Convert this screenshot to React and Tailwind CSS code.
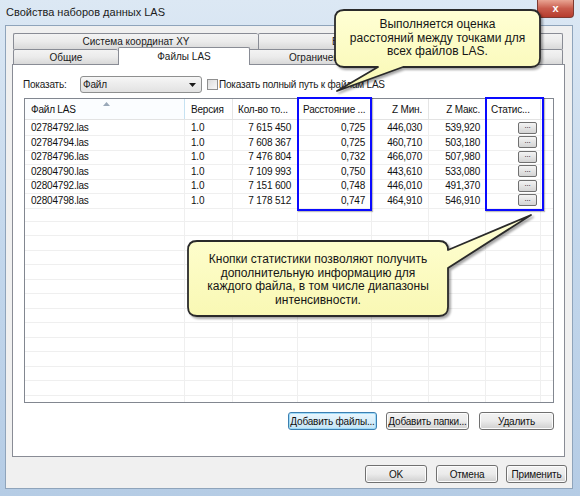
import React from "react";

const rows = [
    ["02784792.las", "1.0", "7 615 450", "0,725", "446,030", "539,920"],
    ["02784794.las", "1.0", "7 608 367", "0,725", "460,710", "503,180"],
    ["02784796.las", "1.0", "7 476 804", "0,732", "466,070", "507,980"],
    ["02804790.las", "1.0", "7 109 993", "0,750", "443,610", "533,080"],
    ["02804792.las", "1.0", "7 151 600", "0,748", "446,010", "491,370"],
    ["02804798.las", "1.0", "7 178 512", "0,747", "464,910", "546,910"],
];

const cols = "grid grid-cols-[160px_48px_65px_74px_57px_57px_55px_1fr]";

function Tab({ label, w, last }) {
    return (
        <div
            className={`h-full flex items-center justify-center border-t border-l border-[#898c95] bg-gradient-to-b from-[#f3f3f3] via-[#ebebeb] to-[#d9d9d9] text-[10px] text-[#1a1a1a] whitespace-nowrap overflow-hidden rounded-t-[2px] ${
                last ? "border-r" : ""
            }`}
            style={{ width: w }}
        >
            {label}
        </div>
    );
}

function Btn({ children, w, focus }) {
    return (
        <div
            className={`h-[18px] flex items-center justify-center rounded-[3px] border text-[10px] tracking-[-0.2px] whitespace-nowrap text-[#111] ${
                focus
                    ? "border-[#3c7fb1] bg-gradient-to-b from-[#eaf6fd] to-[#c4e5f6] shadow-[inset_0_0_0_1px_#9edaf8]"
                    : "border-[#707070] bg-gradient-to-b from-[#f2f2f2] via-[#ebebeb] to-[#cfcfcf] shadow-[inset_0_0_0_1px_#fcfcfc]"
            }`}
            style={{ width: w }}
        >
            {children}
        </div>
    );
}

export default function App() {
    const empty = Array.from({ length: 14 });

    return (
        <div className="relative w-[580px] h-[496px] overflow-hidden bg-gradient-to-b from-[#dce8f4] via-[#c3d7ec] to-[#b5cce5] font-['Liberation_Sans',Arial,sans-serif] text-black">
            {/* Title bar */}
            <div className="h-[25px] flex items-center pl-[6px] text-[11px] text-[#1b1b1b]">
                Свойства наборов данных LAS
            </div>
            <div className="absolute top-0 right-[6px] w-[37px] h-[18px] rounded-b-[4px] border border-t-0 border-[#7e3a32] bg-gradient-to-b from-[#e8a493] via-[#c85b4c] to-[#b63c2d] flex items-center justify-center text-white text-[11px] font-bold">
                x
            </div>

            {/* Client area */}
            <div className="ml-[5px] w-[568px] h-[464px] bg-[#f0f0f0] border border-[#8fa4bb] pt-[7px] pl-[6px] pr-[7px]">
                {/* Tabs row 1 */}
                <div className="flex h-[16px] ml-[1px]">
                    <Tab label="Система координат XY" w={245} />
                    <Tab label="Вертикальная система координат" w={305} last />
                </div>
                {/* Tabs row 2 */}
                <div className="relative z-10 flex h-[15px] ml-[1px]">
                    <Tab label="Общие" w={105} />
                    <div className="self-start -mt-[2px] h-[18px] w-[132px] flex items-center justify-center border-t border-l border-r border-[#898c95] bg-white text-[10px] text-[#1a1a1a] rounded-t-[2px]">
                        Файлы LAS
                    </div>
                    <div className="h-full flex items-center justify-center border-t border-[#898c95] bg-gradient-to-b from-[#f3f3f3] via-[#ebebeb] to-[#d9d9d9] text-[10px] text-[#1a1a1a] w-[200px] whitespace-nowrap">
                        Ограничения поверхности
                    </div>
                    <Tab label="Статистика" w={113} last />
                </div>

                {/* Panel */}
                <div className="h-[393px] w-[553px] bg-white border border-[#898c95] pt-[11px] pl-[10px]">
                    <div className="flex items-center h-[17px] text-[10px] tracking-[-0.2px] text-[#1a1a1a]">
                        <div className="w-[57px]">Показать:</div>
                        <div className="relative w-[122px] h-[17px] rounded-[3px] border border-[#8e8f8f] bg-gradient-to-b from-[#f6f6f6] to-[#e2e2e2] flex items-center pl-[2px]">
                            Файл
                            <svg className="absolute right-[5px] top-[6px]" width="7" height="4" viewBox="0 0 7 4">
                                <path d="M0 0 H7 L3.5 4 Z" fill="#1a1a1a" />
                            </svg>
                        </div>
                        <div className="ml-[5px] w-[11px] h-[11px] border border-[#8f8f8f] bg-gradient-to-br from-[#dcdcdc] to-[#f8f8f8]"></div>
                        <div className="ml-[1px] whitespace-nowrap">Показать полный путь к файлам LAS</div>
                    </div>

                    {/* Table */}
                    <div className="mt-[5px] ml-[1px] w-[530px] h-[305px] border border-[#828790] overflow-hidden text-[10px] tracking-[-0.2px] text-[#111]">
                        <div className={`${cols} h-[21px] border-b border-[#e3e3e3]`}>
                            <div className="relative flex items-center pl-[6px] border-r border-[#c6e2f2] bg-[#fbfdff]">
                                Файл LAS
                                <svg className="absolute left-[78px] top-[3px]" width="7" height="4" viewBox="0 0 7 4">
                                    <path d="M3.5 0 L7 4 H0 Z" fill="#9aa8b8" />
                                </svg>
                            </div>
                            <div className="flex items-center pl-[6px] border-r border-[#e5e5e5]">Версия</div>
                            <div className="flex items-center pl-[5px] border-r border-[#e5e5e5] whitespace-nowrap">Кол-во то...</div>
                            <div className="flex items-center pl-[5px] border-r border-[#e5e5e5] whitespace-nowrap">Расстояние ...</div>
                            <div className="flex items-center justify-end pr-[6px] border-r border-[#e5e5e5]">Z Мин.</div>
                            <div className="flex items-center justify-end pr-[5px] border-r border-[#e5e5e5]">Z Макс.</div>
                            <div className="flex items-center pl-[5px] border-r border-[#e5e5e5] whitespace-nowrap">Статис...</div>
                            <div></div>
                        </div>
                        {rows.map((r) => (
                            <div key={r[0]} className={`${cols} h-[14.5px]`}>
                                <div className="flex items-center pl-[6px] border-r border-b border-[#efefef]">{r[0]}</div>
                                <div className="flex items-center pl-[6px] border-r border-b border-[#efefef]">{r[1]}</div>
                                <div className="flex items-center justify-end pr-[6px] border-r border-b border-[#efefef] whitespace-nowrap">{r[2]}</div>
                                <div className="flex items-center justify-end pr-[6px] border-r border-b border-[#efefef]">{r[3]}</div>
                                <div className="flex items-center justify-end pr-[6px] border-r border-b border-[#efefef]">{r[4]}</div>
                                <div className="flex items-center justify-end pr-[5px] border-r border-b border-[#efefef]">{r[5]}</div>
                                <div className="flex items-center justify-end pr-[3px] border-r border-b border-[#efefef]">
                                    <div className="w-[19px] h-[12px] rounded-[2px] border border-[#707070] bg-gradient-to-b from-[#f4f4f4] to-[#d4d4d4] flex items-center justify-center text-[8px] leading-none pb-[3px]">
                                        ...
                                    </div>
                                </div>
                                <div className="border-b border-[#efefef]"></div>
                            </div>
                        ))}
                        {empty.map((_, i) => (
                            <div key={i} className={`${cols} h-[14.5px]`}>
                                {Array.from({ length: 7 }).map((_, j) => (
                                    <div key={j} className="border-r border-b border-[#efefef]"></div>
                                ))}
                                <div className="border-b border-[#efefef]"></div>
                            </div>
                        ))}
                    </div>

                    {/* Panel buttons */}
                    <div className="mt-[9px] w-[531px] flex justify-end">
                        <Btn w={89} focus>Добавить файлы...</Btn>
                        <div className="ml-[9px]">
                            <Btn w={83}>Добавить папки...</Btn>
                        </div>
                        <div className="ml-[10px]">
                            <Btn w={75}>Удалить</Btn>
                        </div>
                    </div>
                </div>

                {/* Dialog buttons */}
                <div className="mt-[8px] -mr-[2px] flex justify-end">
                    <Btn w={62}>OK</Btn>
                    <div className="ml-[9px]">
                        <Btn w={62}>Отмена</Btn>
                    </div>
                    <div className="ml-[8px]">
                        <Btn w={61}>Применить</Btn>
                    </div>
                </div>
            </div>

            {/* Highlight boxes */}
            <div className="absolute z-20 left-[297px] top-[97px] w-[75px] h-[114px] border-2 border-[#0a0aff] shadow-[1px_1px_1px_rgba(0,0,0,0.25)]"></div>
            <div className="absolute z-20 left-[485px] top-[97px] w-[59px] h-[114px] border-2 border-[#0a0aff] shadow-[1px_1px_1px_rgba(0,0,0,0.25)]"></div>

            {/* Callouts */}
            <svg
                className="absolute z-30 left-0 top-0 pointer-events-none drop-shadow-[2px_2px_1px_rgba(0,0,0,0.35)]"
                width="580"
                height="496"
                viewBox="0 0 580 496"
            >
                <defs>
                    <linearGradient id="cy" x1="0" y1="0" x2="0" y2="1">
                        <stop offset="0" stopColor="#ffffd4" />
                        <stop offset="1" stopColor="#f9f8b4" />
                    </linearGradient>
                </defs>
                <path
                    d="M344 10 H531 Q540 10 540 19 V58 Q540 67 531 67 H403 L337 91 L378 67 H344 Q335 67 335 58 V19 Q335 10 344 10 Z"
                    fill="url(#cy)"
                    stroke="#2a2a2a"
                    strokeWidth="1.8"
                    strokeLinejoin="round"
                />
                <path
                    d="M197 241 H439 Q448 241 448 250 L531 215 L448 268 V307 Q448 316 439 316 H197 Q188 316 188 307 V250 Q188 241 197 241 Z"
                    fill="url(#cy)"
                    stroke="#2a2a2a"
                    strokeWidth="1.8"
                    strokeLinejoin="round"
                />
            </svg>
            <div className="absolute z-30 left-[335px] top-[18px] w-[205px] text-center text-[12px] leading-[13.5px] whitespace-nowrap text-[#151515]">
                Выполняется оценка
                <br />
                расстояний между точками для
                <br />
                всех файлов LAS.
            </div>
            <div className="absolute z-30 left-[188px] top-[253px] w-[260px] text-center text-[12px] leading-[13.5px] whitespace-nowrap text-[#151515]">
                Кнопки статистики позволяют получить
                <br />
                дополнительную информацию для
                <br />
                каждого файла, в том числе диапазоны
                <br />
                интенсивности.
            </div>
        </div>
    );
}
